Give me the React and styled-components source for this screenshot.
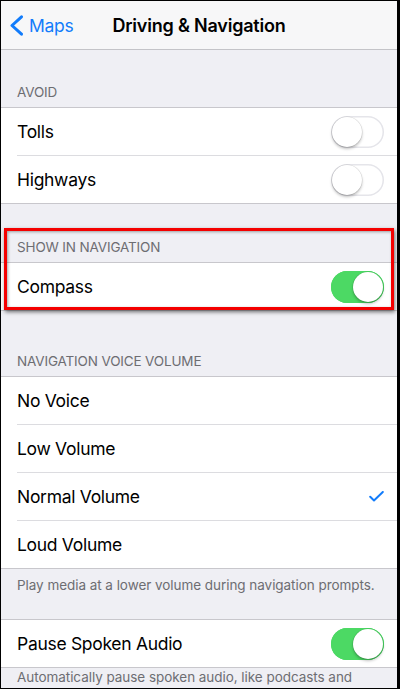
import React from "react";
import styled, { createGlobalStyle, css } from "styled-components";

const Global = createGlobalStyle`
  html, body { margin: 0; padding: 0; background: #fff; }
  body { font-family: Inter, "Noto Sans", "Liberation Sans", sans-serif; -webkit-font-smoothing: antialiased; }
  * { box-sizing: border-box; }
`;

const Frame = styled.div`
  width: 400px;
  height: 689px;
  overflow: hidden;
  background: #efeff4;
  border: 1px solid #000;
  border-right-width: 3px;
  display: flex;
  flex-direction: column;
`;

const NavBar = styled.header`
  flex: none;
  height: 49px;
  background: #f7f7f8;
  border-bottom: 1px solid #c4c4c8;
  display: grid;
  grid-template-columns: 1fr auto 1fr;
  align-items: center;
`;

const Back = styled.div`
  display: flex;
  align-items: center;
  gap: 6px;
  padding-left: 8px;
  color: #127cfb;
  font-size: 17.5px;
  letter-spacing: -0.3px;
`;

const Title = styled.h1`
  margin: 0;
  font-size: 18px;
  font-weight: 600;
  color: #000;
  letter-spacing: -0.2px;
`;

const Section = styled.section`
  position: relative;
  ${(p) =>
    p.$highlight &&
    css`
      &::after {
        content: "";
        position: absolute;
        top: 24px;
        left: 3px;
        right: 3px;
        bottom: 1px;
        border: 3px solid #f40000;
        box-shadow: 1px 2px 4px rgba(0, 0, 0, 0.55), inset 1px 1px 3px rgba(0, 0, 0, 0.35);
        pointer-events: none;
      }
    `}
`;

const Header = styled.div`
  height: ${(p) => p.$h}px;
  display: flex;
  align-items: flex-end;
  padding: 0 16px 6px;
  font-size: 13.5px;
  line-height: 17px;
  color: #6d6d72;
  letter-spacing: -0.15px;
`;

const Group = styled.div`
  background: #fff;
  border-top: 1px solid #c8c7cc;
  border-bottom: 1px solid #c8c7cc;
  padding-left: 16px;
`;

const Row = styled.div`
  height: 47px;
  display: flex;
  align-items: center;
  justify-content: space-between;
  padding-right: 13px;
  font-size: 17.5px;
  color: #000;
  letter-spacing: -0.3px;
  & + & {
    height: 48px;
    border-top: 1px solid #dcdce0;
  }
`;

const Footer = styled.div`
  padding: ${(p) => p.$top}px 16px 0;
  height: ${(p) => p.$h}px;
  font-size: 13.5px;
  line-height: 17px;
  color: #6d6d72;
  letter-spacing: -0.05px;
  white-space: nowrap;
  flex: none;
`;

const Track = styled.div`
  width: 53px;
  height: 32px;
  border-radius: 16px;
  position: relative;
  flex: none;
  background: ${(p) => (p.$on ? "#4cd964" : "#fff")};
  box-shadow: inset 0 0 0 1.5px ${(p) => (p.$on ? "#4cd964" : "#e5e5ea")};
`;

const Knob = styled.div`
  position: absolute;
  top: 1px;
  left: ${(p) => (p.$on ? "22px" : "1px")};
  width: 30px;
  height: 30px;
  border-radius: 50%;
  background: #fff;
  box-shadow: 0 2px 3px rgba(0, 0, 0, 0.25), 0 0 0 0.5px rgba(0, 0, 0, 0.12);
`;

const Toggle = ({ on }) => (
  <Track $on={on}>
    <Knob $on={on} />
  </Track>
);

const Chevron = () => (
  <svg width="14" height="21" viewBox="0 0 14 21" fill="none">
    <path d="M12.5 1.8 L3 10.5 L12.5 19.2" stroke="#127cfb" strokeWidth="3" strokeLinecap="round" strokeLinejoin="round" />
  </svg>
);

const Check = () => (
  <svg width="15" height="11" viewBox="0 0 15 11" fill="none">
    <path d="M1.2 5.8 L5 9.5 L13.8 1" stroke="#127cfb" strokeWidth="2" strokeLinecap="round" strokeLinejoin="round" />
  </svg>
);

export default function App() {
  return (
    <>
      <Global />
      <Frame>
        <NavBar>
          <Back>
            <Chevron />
            <span>Maps</span>
          </Back>
          <Title>Driving &amp; Navigation</Title>
          <div />
        </NavBar>

        <Section>
          <Header $h={57}>AVOID</Header>
          <Group>
            <Row>
              Tolls
              <Toggle />
            </Row>
            <Row>
              Highways
              <Toggle />
            </Row>
          </Group>
        </Section>

        <Section $highlight>
          <Header $h={58}>SHOW IN NAVIGATION</Header>
          <Group>
            <Row>
              Compass
              <Toggle on />
            </Row>
          </Group>
        </Section>

        <Section>
          <Header $h={65}>NAVIGATION VOICE VOLUME</Header>
          <Group>
            <Row>No Voice</Row>
            <Row>Low Volume</Row>
            <Row>
              Normal Volume
              <Check />
            </Row>
            <Row>Loud Volume</Row>
          </Group>
          <Footer $top={8} $h={50}>
            Play media at a lower volume during navigation prompts.
          </Footer>
        </Section>

        <Section>
          <Group>
            <Row>
              Pause Spoken Audio
              <Toggle on />
            </Row>
          </Group>
          <Footer $top={1} $h={40}>
            Automatically pause spoken audio, like podcasts and
          </Footer>
        </Section>
      </Frame>
    </>
  );
}
